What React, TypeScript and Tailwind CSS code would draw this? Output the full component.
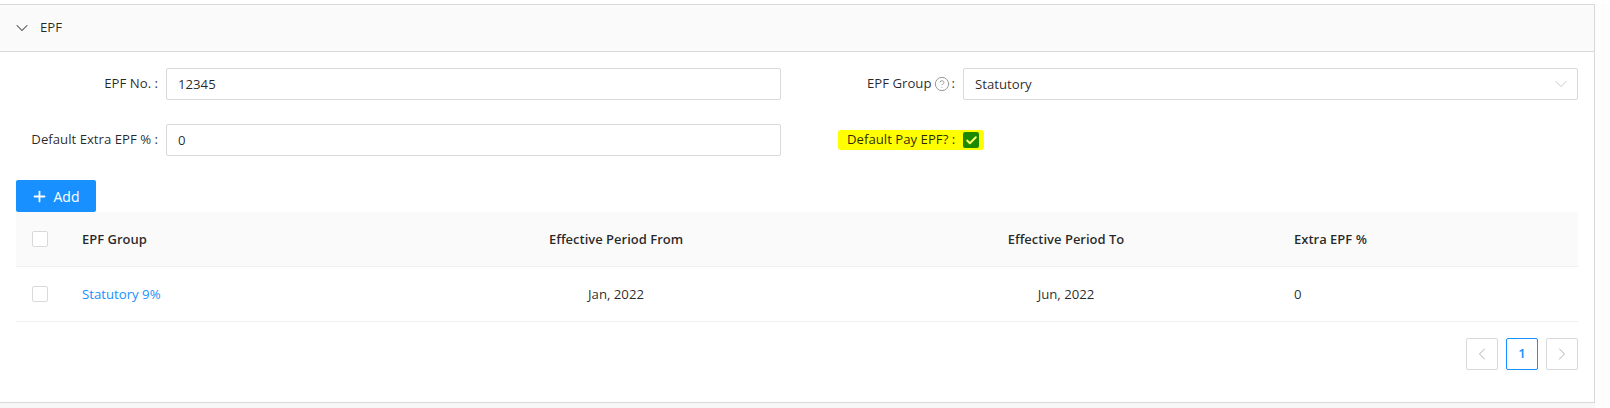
import React from 'react';
import { ChevronDown, ChevronLeft, ChevronRight, CircleHelp, Plus, Check } from 'lucide-react';

const font = "font-['Open_Sans','Noto_Sans',sans-serif]";

function Box() {
  return <span className="block h-4 w-4 rounded-[2px] border border-[#d9d9d9] bg-white" />;
}

function Label({ children }: { children: React.ReactNode }) {
  return <span className="whitespace-nowrap">{children}</span>;
}

const columns = 'grid grid-cols-[66px_296px_476px_424px_1fr] items-center';

export default function App() {
  return (
    <div className={`${font} h-[408px] w-[1610px] overflow-hidden bg-[#fdfdfd] text-[13.2px] text-[rgba(0,0,0,0.85)]`}>
      <div className="h-[4px] bg-white" />
      <div className="h-[399px] w-[1595px] border-y border-r border-[#d9d9d9] bg-white">
        <div className="flex h-[47px] items-center gap-[8px] border-b border-[#d9d9d9] bg-[#fafafa] pl-[12px]">
          <ChevronDown size={20} strokeWidth={1.25} className="text-[#444]" />
          <span>EPF</span>
        </div>

        <div className="px-[16px] pt-[16px]">
          <div className="grid grid-cols-[150px_615px_182px_1fr] items-center gap-y-[24px]">
            <div className="flex justify-end pr-[8px]"><Label>EPF No. :</Label></div>
            <div className="flex h-[32px] items-center rounded-[2px] border border-[#d9d9d9] px-[11px]">
              <span className="pt-[2px]">12345</span>
            </div>
            <div className="flex items-center justify-end pr-[8px]">
              <Label>EPF Group</Label>
              <CircleHelp size={16} strokeWidth={1.5} className="mx-[2px] text-[#999]" />
              <Label>:</Label>
            </div>
            <div className="flex h-[32px] items-center justify-between rounded-[2px] border border-[#d9d9d9] pl-[11px] pr-[6px]">
              <span className="pt-[2px]">Statutory</span>
              <ChevronDown size={20} strokeWidth={1} className="text-[#bfbfbf]" />
            </div>

            <div className="flex justify-end pr-[8px]"><Label>Default Extra EPF % :</Label></div>
            <div className="flex h-[32px] items-center rounded-[2px] border border-[#d9d9d9] px-[11px]">
              <span className="pt-[2px]">0</span>
            </div>
            <div className="col-span-2 flex items-center pl-[57px]">
              <div className="flex h-[20px] items-center gap-[8px] rounded-[3px] bg-[#ffff00] pl-[9px] pr-[5px]">
                <span className="whitespace-nowrap">Default Pay EPF? :</span>
                <span className="flex h-4 w-4 items-center justify-center rounded-[2px] bg-[#1c8a00]">
                  <Check size={13} strokeWidth={3.5} className="text-[#ffff66]" />
                </span>
              </div>
            </div>
          </div>

          <button className="mt-[24px] flex h-[32px] w-[80px] items-center justify-center gap-[6px] rounded-[2px] bg-[#1890ff] pr-[2px] text-[14px] text-white">
            <Plus size={17} strokeWidth={2.5} />
            Add
          </button>

          <div className={`${columns} h-[55px] border-b border-[#f0f0f0] bg-[#fafafa] text-[13px] font-semibold`}>
            <div className="pl-[16px]"><Box /></div>
            <div className="pt-[2px]">EPF Group</div>
            <div className="pt-[2px] text-center">Effective Period From</div>
            <div className="pt-[2px] text-center">Effective Period To</div>
            <div className="pl-[16px] pt-[2px]">Extra EPF %</div>
          </div>
          <div className={`${columns} h-[55px] border-b border-[#f0f0f0]`}>
            <div className="pl-[16px]"><Box /></div>
            <div className="pt-[2px] text-[#1890ff]">Statutory 9%</div>
            <div className="pt-[2px] text-center">Jan, 2022</div>
            <div className="pt-[2px] text-center">Jun, 2022</div>
            <div className="pl-[16px] pt-[2px]">0</div>
          </div>

          <div className="mt-[16px] flex justify-end gap-[8px]">
            <span className="flex h-[32px] w-[32px] items-center justify-center rounded-[2px] border border-[#d9d9d9] text-[#bfbfbf]"><ChevronLeft size={20} strokeWidth={1.25} /></span>
            <span className="flex h-[32px] w-[32px] items-center justify-center rounded-[2px] border border-[#1890ff] font-semibold text-[#1890ff]">1</span>
            <span className="flex h-[32px] w-[32px] items-center justify-center rounded-[2px] border border-[#d9d9d9] text-[#bfbfbf]"><ChevronRight size={20} strokeWidth={1.25} /></span>
          </div>
        </div>
      </div>
      <div className="h-[5px] w-[1595px] bg-[#f7f7f7]" />
    </div>
  );
}
